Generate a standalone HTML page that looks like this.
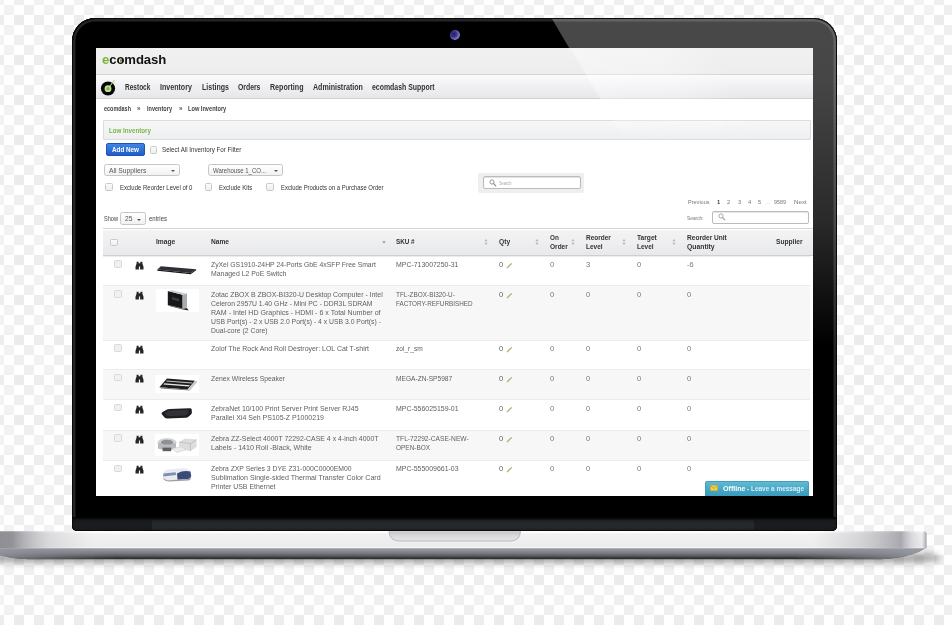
<!DOCTYPE html>
<html lang="en"><head><meta charset="utf-8"><title>ecomdash - Low Inventory</title>
<style>
html,body{margin:0;padding:0}
body{width:952px;height:625px;overflow:hidden;position:relative;font-family:"Liberation Sans",sans-serif;
 background:repeating-conic-gradient(#eeeeee 0% 25%,#ffffff 0% 50%) 14px 5px/20px 20px}
.abs,.b,.t{position:absolute}
.t{white-space:nowrap;transform-origin:0 50%;display:block}
#lid{left:72px;top:18px;width:765px;height:513px;border-radius:23px 23px 5px 5px;background:#000;overflow:hidden;
 box-shadow:inset 0 0 0 1px #050505, inset 0 0 0 3.5px #242425}
#gloss{left:0;top:0;width:765px;height:513px;
 background:linear-gradient(180deg,rgba(255,255,255,.285) 0,rgba(255,255,255,.275) 12%,rgba(255,255,255,.16) 40%,rgba(255,255,255,0) 64%);
 clip-path:polygon(479.5px 0,765px 0,765px 513px,782px 513px);}
#lidrim{left:0;top:0;width:765px;height:513px;border-radius:23px 23px 5px 5px;box-shadow:inset 0 0 0 1px #0a0a0a, inset 0 0 0 3px rgba(40,40,41,.0)}
#hingeband{left:0;top:499px;width:765px;height:14px;background:linear-gradient(#000,#0c0d0e 14%,#17191b 22%,#1b1d20 60%,#16181a)}
#hingemid{left:80px;top:502px;width:602px;height:11px;background:linear-gradient(#1c1e21,#262a2e 35%,#24282b 70%,#1c1f22)}
#cam{left:377.6px;top:12.2px;width:10px;height:10px;border-radius:50%;background:radial-gradient(circle at 36% 40%,#2a2474 0,#342d86 30%,#6d66ac 55%,#8079ba 68%,#1b1930 84%,#060608 100%)}
#screen{left:96px;top:48px;width:717px;height:447.6px;background:#fff;overflow:hidden}
#sgloss{left:0;top:0;width:717px;height:447.6px;pointer-events:none}
#shadow{left:-10px;top:553px;width:950px;height:10px;border-radius:40px/10px;background:rgba(0,0,0,.33);filter:blur(3px)}
#base{left:-18px;top:531px;width:945px;height:30px}
</style></head><body>
<svg class="abs" style="left:0;top:0" width="952" height="625" viewBox="0 0 952 625"><defs><pattern id="ck" x="4" y="5" width="40" height="40" patternUnits="userSpaceOnUse"><rect width="40" height="40" fill="#fff"/><g fill="#ebebeb"><rect x="10" y="10" width="10" height="10"/><rect x="30" y="10" width="10" height="10" fill="#ededed"/></g><g fill="#efefef"><rect x="20" y="0" width="10" height="10"/><rect x="20" y="20" width="10" height="10"/><rect x="10" y="30" width="10" height="10"/></g><g fill="#f2f2f2"><rect x="0" y="0" width="10" height="10"/><rect x="0" y="20" width="10" height="10"/><rect x="30" y="30" width="10" height="10"/></g></pattern></defs><rect width="952" height="625" fill="url(#ck)"/></svg>
<div id="shadow" class="abs"></div>
<svg id="base" class="abs" width="945" height="30" viewBox="-18 531 945 30">
 <defs>
  <linearGradient id="gt" x1="0" x2="0" y1="0" y2="1"><stop offset="0" stop-color="#ffffff"/><stop offset=".09" stop-color="#fdfdfd"/><stop offset=".14" stop-color="#f2f2f2"/><stop offset=".9" stop-color="#ececed"/><stop offset=".96" stop-color="#f8f8f8"/><stop offset="1" stop-color="#e2e2e4"/></linearGradient>
  <linearGradient id="gs" gradientUnits="userSpaceOnUse" x1="-18" x2="926.5" y1="0" y2="0">
   <stop offset="0" stop-color="#84848a" stop-opacity=".95"/><stop offset=".032" stop-color="#8a8a90" stop-opacity=".92"/><stop offset=".045" stop-color="#a5a5aa" stop-opacity=".8"/><stop offset=".07" stop-color="#c6c6ca" stop-opacity=".55"/><stop offset=".12" stop-color="#d8d8da" stop-opacity="0"/>
   <stop offset=".88" stop-color="#b8b8be" stop-opacity="0"/><stop offset=".93" stop-color="#b4b4ba" stop-opacity=".45"/><stop offset=".958" stop-color="#a2a2aa" stop-opacity=".7"/><stop offset=".973" stop-color="#9c9ca4" stop-opacity=".85"/><stop offset=".985" stop-color="#c4c4ca" stop-opacity=".5"/><stop offset=".995" stop-color="#dedee2" stop-opacity=".3"/><stop offset="1" stop-color="#85858b" stop-opacity=".8"/></linearGradient>
  <linearGradient id="gb" x1="0" x2="0" y1="0" y2="1"><stop offset="0" stop-color="#a9acb1"/><stop offset=".12" stop-color="#9b9ea4"/><stop offset=".5" stop-color="#7a7c82"/><stop offset=".75" stop-color="#55575b"/><stop offset=".93" stop-color="#2c2d2f"/><stop offset="1" stop-color="#3a3b3d"/></linearGradient>
  <linearGradient id="ge" gradientUnits="userSpaceOnUse" x1="-18" x2="926.5" y1="0" y2="0"><stop offset="0" stop-color="#9a9aa2" stop-opacity=".9"/><stop offset=".06" stop-color="#8e8e96" stop-opacity=".55"/><stop offset=".14" stop-color="#8e8e96" stop-opacity="0"/><stop offset=".86" stop-color="#8e8e96" stop-opacity="0"/><stop offset=".94" stop-color="#8e9098" stop-opacity=".55"/><stop offset="1" stop-color="#9a9ca4" stop-opacity=".9"/></linearGradient>
  <linearGradient id="gn" x1="0" x2="0" y1="0" y2="1"><stop offset="0" stop-color="#c4c4c7"/><stop offset=".45" stop-color="#d9d9db"/><stop offset="1" stop-color="#e6e6e8"/></linearGradient>
 </defs>
 <path d="M-18 547 H926.5 C924 550.5 905 559.2 880 559.2 H28.5 C3.5 559.2 -15.5 550.5 -18 547 Z" fill="url(#gb)"/>
 <path d="M-18 547 H926.5 C924 550.5 905 559.2 880 559.2 H28.5 C3.5 559.2 -15.5 550.5 -18 547 Z" fill="url(#ge)"/>
 <path d="M-15.5 531.2 H924 Q926.5 531.2 926.5 533.8 V548.2 H-18 V533.8 Q-18 531.2 -15.5 531.2 Z" fill="url(#gt)"/>
 <path d="M-15.5 531.2 H924 Q926.5 531.2 926.5 533.8 V548.2 H-18 V533.8 Q-18 531.2 -15.5 531.2 Z" fill="url(#gs)"/>
 <path d="M389 531.2 H520.5 Q520 541 510 541 H399.5 Q389.5 541 389 531.2 Z" fill="url(#gn)"/>
 <path d="M389 531.2 Q389.5 541 399.5 541 H510 Q520 541 520.5 531.2" fill="none" stroke="#b4b4b8" stroke-width=".9"/>
</svg>
<div id="lid" class="abs">
 <div id="gloss" class="abs"></div>
 <div id="hingeband" class="abs"></div>
 <div id="hingemid" class="abs"></div>
 <div id="lidrim" class="abs"></div>
 <div id="cam" class="abs"></div>
</div>
<div id="screen" class="abs">
<div class="b" style="left:0.0px;top:0.0px;width:717.0px;height:27.0px;background:linear-gradient(#f1f1f1,#ededed);border-bottom:1px solid #d4d4d4;box-sizing:border-box"></div>
<span class="t logo" style="left:6.2px;top:4.2px;font-size:13px;line-height:15px;font-weight:bold;color:#111;transform:scaleX(1.01);letter-spacing:-0.1px"><span style="color:#7ab536">e</span>comdash</span>
<div class="b" style="left:23.5px;top:11.4px;width:2.4px;height:2.4px;background:#5f9e2c;border-radius:50%"></div>
<div class="b" style="left:0.0px;top:27.0px;width:717.0px;height:24.0px;background:linear-gradient(#fbfbfb,#f2f2f4 40%,#e6e7ea);border-bottom:1px solid #d0d0d3;box-sizing:border-box"></div>
<svg class="b" style="left:4px;top:31px" width="18" height="18" viewBox="0 0 18 18"><circle cx="8" cy="9.5" r="7.1" fill="#070707"/><path d="M9.2 8 L14.3 1.5" stroke="#a9d27a" stroke-width="1.05" stroke-linecap="round"/><circle cx="8" cy="9.7" r="3.4" fill="#c2e29b"/><circle cx="8" cy="9.7" r="1.8" fill="#7cba3c"/></svg>
<span class="t" style="left:28.8px;top:33.9px;font-size:8.6px;line-height:10.32px;font-weight:bold;color:#333;transform:scaleX(0.759);">Restock</span>
<span class="t" style="left:64.3px;top:33.9px;font-size:8.6px;line-height:10.32px;font-weight:bold;color:#333;transform:scaleX(0.824);">Inventory</span>
<span class="t" style="left:105.7px;top:33.9px;font-size:8.6px;line-height:10.32px;font-weight:bold;color:#333;transform:scaleX(0.816);">Listings</span>
<span class="t" style="left:141.6px;top:33.9px;font-size:8.6px;line-height:10.32px;font-weight:bold;color:#333;transform:scaleX(0.794);">Orders</span>
<span class="t" style="left:173.7px;top:33.9px;font-size:8.6px;line-height:10.32px;font-weight:bold;color:#333;transform:scaleX(0.825);">Reporting</span>
<span class="t" style="left:216.6px;top:33.9px;font-size:8.6px;line-height:10.32px;font-weight:bold;color:#333;transform:scaleX(0.822);">Administration</span>
<span class="t" style="left:276.3px;top:33.9px;font-size:8.6px;line-height:10.32px;font-weight:bold;color:#333;transform:scaleX(0.805);">ecomdash Support</span>
<span class="t" style="left:7.7px;top:56.8px;font-size:6.6px;line-height:7.92px;font-weight:bold;color:#444;transform:scaleX(0.827);">ecomdash</span>
<span class="t" style="left:40.6px;top:56.8px;font-size:6.6px;line-height:7.92px;font-weight:bold;color:#555;transform:scaleX(0.926);">»</span>
<span class="t" style="left:51.0px;top:56.8px;font-size:6.6px;line-height:7.92px;font-weight:bold;color:#444;transform:scaleX(0.842);">Inventory</span>
<span class="t" style="left:83.2px;top:56.8px;font-size:6.6px;line-height:7.92px;font-weight:bold;color:#555;transform:scaleX(0.926);">»</span>
<span class="t" style="left:92.0px;top:56.8px;font-size:6.6px;line-height:7.92px;font-weight:bold;color:#444;transform:scaleX(0.856);">Low Inventory</span>
<div class="b" style="left:7.0px;top:72.1px;width:707.6px;height:19.6px;background:linear-gradient(#f7f7f7,#eceef1);border:1px solid #dcdcde;box-sizing:border-box;border-radius:1px"></div>
<span class="t" style="left:12.8px;top:78.6px;font-size:6.8px;line-height:8.16px;font-weight:bold;color:#7ab648;transform:scaleX(0.911);">Low Inventory</span>
<div class="b" style="left:9.7px;top:95.2px;width:39.0px;height:13.2px;background:linear-gradient(#3f85e6,#1f5fc8);border:1px solid #1d55b5;box-sizing:border-box;border-radius:2px"></div>
<span class="t" style="left:15.8px;top:98.0px;font-size:7.4px;line-height:8.88px;font-weight:bold;color:#fff;transform:scaleX(0.853);">Add New</span>
<div class="b" style="left:53.6px;top:98.3px;width:7.6px;height:7.6px;background:linear-gradient(#fbfbfb,#eeeeee);border:1px solid #c9c9c9;box-sizing:border-box;border-radius:1.5px"></div>
<span class="t" style="left:66.0px;top:97.5px;font-size:6.9px;line-height:8.28px;color:#333;transform:scaleX(0.901);">Select All Inventory For Filter</span>
<div class="b" style="left:8.4px;top:116.0px;width:75.8px;height:11.6px;background:linear-gradient(#fff,#f1f1f1);border:1px solid #c6c6c6;box-sizing:border-box;border-radius:2.5px"><i style="position:absolute;right:4px;top:5.0px;border:2px solid transparent;border-top:2.4px solid #555;border-bottom:0"></i></div>
<span class="t" style="left:13.3px;top:117.8px;font-size:7.6px;line-height:9.12px;color:#555;transform:scaleX(0.888);">All Suppliers</span>
<div class="b" style="left:112.0px;top:116.0px;width:75.0px;height:11.6px;background:linear-gradient(#fff,#f1f1f1);border:1px solid #c6c6c6;box-sizing:border-box;border-radius:2.5px"><i style="position:absolute;right:4px;top:5.0px;border:2px solid transparent;border-top:2.4px solid #555;border-bottom:0"></i></div>
<span class="t" style="left:116.6px;top:117.8px;font-size:7.6px;line-height:9.12px;color:#555;transform:scaleX(0.792);">Warehouse 1_CO...</span>
<div class="b" style="left:9.0px;top:135.2px;width:7.6px;height:7.6px;background:linear-gradient(#fbfbfb,#eeeeee);border:1px solid #c9c9c9;box-sizing:border-box;border-radius:1.5px"></div>
<span class="t" style="left:23.5px;top:135.5px;font-size:6.9px;line-height:8.28px;color:#333;transform:scaleX(0.871);">Exclude Reorder Level of 0</span>
<div class="b" style="left:108.8px;top:135.2px;width:7.6px;height:7.6px;background:linear-gradient(#fbfbfb,#eeeeee);border:1px solid #c9c9c9;box-sizing:border-box;border-radius:1.5px"></div>
<span class="t" style="left:123.3px;top:135.5px;font-size:6.9px;line-height:8.28px;color:#333;transform:scaleX(0.877);">Exclude Kits</span>
<div class="b" style="left:170.0px;top:135.2px;width:7.6px;height:7.6px;background:linear-gradient(#fbfbfb,#eeeeee);border:1px solid #c9c9c9;box-sizing:border-box;border-radius:1.5px"></div>
<span class="t" style="left:184.8px;top:135.5px;font-size:6.9px;line-height:8.28px;color:#333;transform:scaleX(0.857);">Exclude Products on a Purchase Order</span>
<div class="b" style="left:382.0px;top:124.9px;width:105.8px;height:19.8px;background:#efefef;border-radius:2px"></div>
<div class="b" style="left:387.0px;top:128.0px;width:97.8px;height:12.8px;background:#fff;border:1px solid #bbb;box-sizing:border-box;border-radius:2px;box-shadow:inset 0 1px 1px rgba(0,0,0,.12)"></div>
<svg class="b" style="left:392.6px;top:130.6px" width="8" height="8" viewBox="0 0 8 8"><circle cx="3" cy="3" r="2.1" fill="none" stroke="#8a8a8a" stroke-width=".9"/><path d="M4.6 4.6 L6.8 6.8" stroke="#8a8a8a" stroke-width="1.2" stroke-linecap="round"/></svg>
<span class="t" style="left:402.5px;top:131.1px;font-size:6.2px;line-height:7.44px;color:#aaa;transform:scaleX(0.636);">Search</span>
<span class="t" style="left:592.0px;top:150.1px;font-size:6.2px;line-height:7.44px;color:#777;transform:scaleX(0.895);">Previous</span>
<span class="t" style="left:620.8px;top:150.1px;font-size:6.2px;line-height:7.44px;font-weight:bold;color:#444;transform:scaleX(0.928);">1</span>
<span class="t" style="left:631.2px;top:150.1px;font-size:6.2px;line-height:7.44px;color:#777;transform:scaleX(0.928);">2</span>
<span class="t" style="left:641.6px;top:150.1px;font-size:6.2px;line-height:7.44px;color:#777;transform:scaleX(0.928);">3</span>
<span class="t" style="left:652.0px;top:150.1px;font-size:6.2px;line-height:7.44px;color:#777;transform:scaleX(0.928);">4</span>
<span class="t" style="left:662.2px;top:150.1px;font-size:6.2px;line-height:7.44px;color:#777;transform:scaleX(0.928);">5</span>
<span class="t" style="left:670.0px;top:150.1px;font-size:6.2px;line-height:7.44px;color:#999;transform:scaleX(0.645);">…</span>
<span class="t" style="left:678.3px;top:150.1px;font-size:6.2px;line-height:7.44px;color:#777;transform:scaleX(0.870);">9589</span>
<span class="t" style="left:697.5px;top:150.1px;font-size:6.2px;line-height:7.44px;color:#777;transform:scaleX(1.004);">Next</span>
<span class="t" style="left:7.7px;top:166.8px;font-size:6.6px;line-height:7.92px;color:#444;transform:scaleX(0.848);">Show</span>
<div class="b" style="left:23.8px;top:164.3px;width:26.2px;height:12.8px;background:linear-gradient(#fff,#f1f1f1);border:1px solid #c6c6c6;box-sizing:border-box;border-radius:2.5px"><i style="position:absolute;right:4px;top:5.6px;border:2px solid transparent;border-top:2.4px solid #555;border-bottom:0"></i></div>
<span class="t" style="left:28.6px;top:167.2px;font-size:7.2px;line-height:8.64px;color:#555;transform:scaleX(0.924);">25</span>
<span class="t" style="left:52.5px;top:166.8px;font-size:6.6px;line-height:7.92px;color:#444;transform:scaleX(0.909);">entries</span>
<span class="t" style="left:590.8px;top:166.1px;font-size:6.2px;line-height:7.44px;color:#777;transform:scaleX(0.777);">Search:</span>
<div class="b" style="left:615.6px;top:162.7px;width:97.4px;height:13.6px;background:#fff;border:1px solid #bbb;box-sizing:border-box;border-radius:2px;box-shadow:inset 0 1px 1px rgba(0,0,0,.1)"></div>
<svg class="b" style="left:621.6px;top:165.4px" width="8" height="8" viewBox="0 0 8 8"><circle cx="3" cy="3" r="2.1" fill="none" stroke="#a0a0a0" stroke-width=".9"/><path d="M4.6 4.6 L6.8 6.8" stroke="#a0a0a0" stroke-width="1.2" stroke-linecap="round"/></svg>
<div class="b" style="left:7.2px;top:180.4px;width:709.8px;height:27.2px;background:linear-gradient(#f4f4f5,#eeeef0 55%,#e7e8ea);border-top:1px solid #d4d4d6;border-bottom:1px solid #cfcfd2;box-sizing:border-box;box-shadow:inset 0 1px 0 #fff"></div>
<div class="b" style="left:14.0px;top:190.6px;width:7.8px;height:7.8px;background:linear-gradient(#fbfbfb,#eeeeee);border:1px solid #c9c9c9;box-sizing:border-box;border-radius:1.5px"></div>
<span class="t" style="left:60.0px;top:189.4px;font-size:8.0px;line-height:9.6px;font-weight:bold;color:#333;transform:scaleX(0.835);">Image</span>
<span class="t" style="left:115.0px;top:189.4px;font-size:8.0px;line-height:9.6px;font-weight:bold;color:#333;transform:scaleX(0.826);">Name</span>
<span class="t" style="left:300.3px;top:189.4px;font-size:8.0px;line-height:9.6px;font-weight:bold;color:#333;transform:scaleX(0.785);">SKU #</span>
<span class="t" style="left:403.3px;top:189.4px;font-size:8.0px;line-height:9.6px;font-weight:bold;color:#333;transform:scaleX(0.832);">Qty</span>
<span class="t" style="left:453.8px;top:185.4px;font-size:8.0px;line-height:9.6px;font-weight:bold;color:#333;transform:scaleX(0.792);">On</span>
<span class="t" style="left:453.8px;top:194.4px;font-size:8.0px;line-height:9.6px;font-weight:bold;color:#333;transform:scaleX(0.817);">Order</span>
<span class="t" style="left:489.7px;top:185.4px;font-size:8.0px;line-height:9.6px;font-weight:bold;color:#333;transform:scaleX(0.808);">Reorder</span>
<span class="t" style="left:489.7px;top:194.4px;font-size:8.0px;line-height:9.6px;font-weight:bold;color:#333;transform:scaleX(0.811);">Level</span>
<span class="t" style="left:540.9px;top:185.4px;font-size:8.0px;line-height:9.6px;font-weight:bold;color:#333;transform:scaleX(0.830);">Target</span>
<span class="t" style="left:540.9px;top:194.4px;font-size:8.0px;line-height:9.6px;font-weight:bold;color:#333;transform:scaleX(0.811);">Level</span>
<span class="t" style="left:591.3px;top:185.4px;font-size:8.0px;line-height:9.6px;font-weight:bold;color:#333;transform:scaleX(0.821);">Reorder Unit</span>
<span class="t" style="left:591.3px;top:194.4px;font-size:8.0px;line-height:9.6px;font-weight:bold;color:#333;transform:scaleX(0.851);">Quantity</span>
<span class="t" style="left:680.0px;top:189.4px;font-size:8.0px;line-height:9.6px;font-weight:bold;color:#333;transform:scaleX(0.828);">Supplier</span>
<svg class="b" style="left:388.2px;top:190.8px" width="4" height="6" viewBox="0 0 4 6"><path d="M2 0 L3.6 2.2 H0.4 Z M2 6 L3.6 3.8 H0.4 Z" fill="#b5b5b8"/></svg>
<svg class="b" style="left:438.7px;top:190.8px" width="4" height="6" viewBox="0 0 4 6"><path d="M2 0 L3.6 2.2 H0.4 Z M2 6 L3.6 3.8 H0.4 Z" fill="#b5b5b8"/></svg>
<svg class="b" style="left:474.8px;top:190.8px" width="4" height="6" viewBox="0 0 4 6"><path d="M2 0 L3.6 2.2 H0.4 Z M2 6 L3.6 3.8 H0.4 Z" fill="#b5b5b8"/></svg>
<svg class="b" style="left:525.9px;top:190.8px" width="4" height="6" viewBox="0 0 4 6"><path d="M2 0 L3.6 2.2 H0.4 Z M2 6 L3.6 3.8 H0.4 Z" fill="#b5b5b8"/></svg>
<svg class="b" style="left:576.0px;top:190.8px" width="4" height="6" viewBox="0 0 4 6"><path d="M2 0 L3.6 2.2 H0.4 Z M2 6 L3.6 3.8 H0.4 Z" fill="#b5b5b8"/></svg>
<svg class="b" style="left:285.9px;top:192.6px" width="4" height="3" viewBox="0 0 4 3"><path d="M0.3 0.3 H3.7 L2 2.7 Z" fill="#999"/></svg>
<div class="b" style="left:7.2px;top:207.6px;width:706.8px;height:29.8px;background:#fff;border-top:1px solid #ececec;box-sizing:border-box"></div>
<div class="b" style="left:18.2px;top:212.2px;width:7.6px;height:7.6px;background:#f0f0f0;border:1px solid #d9d9d9;box-sizing:border-box;border-radius:1.5px"></div>
<svg class="b" style="left:38.6px;top:213.0px" width="9" height="9" viewBox="0 0 9 9"><path d="M1.6 0.8 h2 v1.4 h1.8 v-1.4 h2 v1.6 l1.1 3.4 v2.6 h-3.4 v-3 h-1.2 v3 h-3.4 v-2.6 l1.1 -3.4 z" fill="#262626"/></svg>
<span class="t" style="left:115.0px;top:211.8px;font-size:7.6px;line-height:9.12px;color:#5e5e5e;transform:scaleX(0.897);">ZyXel GS1910-24HP 24-Ports GbE 4xSFP Free Smart</span>
<span class="t" style="left:115.0px;top:220.8px;font-size:7.6px;line-height:9.12px;color:#5e5e5e;transform:scaleX(0.907);">Managed L2 PoE Switch</span>
<span class="t" style="left:300.3px;top:211.8px;font-size:7.6px;line-height:9.12px;color:#5e5e5e;transform:scaleX(0.913);">MPC-713007250-31</span>
<span class="t" style="left:403.2px;top:211.8px;font-size:7.6px;line-height:9.12px;color:#5e5e5e;transform:scaleX(0.994);">0</span>
<svg class="b" style="left:409.8px;top:214.0px" width="7" height="7" viewBox="0 0 7 7"><path d="M0.6 6.4 L1.1 4.9 L5.3 0.9 L6.2 1.8 L2 5.9 Z" fill="#b9a96c"/></svg>
<span class="t" style="left:453.8px;top:211.8px;font-size:7.6px;line-height:9.12px;color:#777;transform:scaleX(0.994);">0</span>
<span class="t" style="left:489.7px;top:211.8px;font-size:7.6px;line-height:9.12px;color:#777;transform:scaleX(0.994);">3</span>
<span class="t" style="left:540.9px;top:211.8px;font-size:7.6px;line-height:9.12px;color:#777;transform:scaleX(0.994);">0</span>
<span class="t" style="left:591.3px;top:211.8px;font-size:7.6px;line-height:9.12px;color:#777;transform:scaleX(0.977);">-6</span>
<div class="b" style="left:7.2px;top:237.4px;width:706.8px;height:54.2px;background:#f7f7f7;border-top:1px solid #ececec;box-sizing:border-box"></div>
<div class="b" style="left:18.2px;top:242.0px;width:7.6px;height:7.6px;background:#f0f0f0;border:1px solid #d9d9d9;box-sizing:border-box;border-radius:1.5px"></div>
<svg class="b" style="left:38.6px;top:242.8px" width="9" height="9" viewBox="0 0 9 9"><path d="M1.6 0.8 h2 v1.4 h1.8 v-1.4 h2 v1.6 l1.1 3.4 v2.6 h-3.4 v-3 h-1.2 v3 h-3.4 v-2.6 l1.1 -3.4 z" fill="#262626"/></svg>
<span class="t" style="left:115.0px;top:241.8px;font-size:7.6px;line-height:9.12px;color:#5e5e5e;transform:scaleX(0.910);">Zotac ZBOX B ZBOX-BI320-U Desktop Computer - Intel</span>
<span class="t" style="left:115.0px;top:250.8px;font-size:7.6px;line-height:9.12px;color:#5e5e5e;transform:scaleX(0.900);">Celeron 2957U 1.40 GHz - Mini PC - DDR3L SDRAM</span>
<span class="t" style="left:115.0px;top:259.8px;font-size:7.6px;line-height:9.12px;color:#5e5e5e;transform:scaleX(0.931);">RAM - Intel HD Graphics - HDMI - 6 x Total Number of</span>
<span class="t" style="left:115.0px;top:268.8px;font-size:7.6px;line-height:9.12px;color:#5e5e5e;transform:scaleX(0.897);">USB Port(s) - 2 x USB 2.0 Port(s) - 4 x USB 3.0 Port(s) -</span>
<span class="t" style="left:115.0px;top:277.8px;font-size:7.6px;line-height:9.12px;color:#5e5e5e;transform:scaleX(0.899);">Dual-core (2 Core)</span>
<span class="t" style="left:300.3px;top:241.8px;font-size:7.6px;line-height:9.12px;color:#5e5e5e;transform:scaleX(0.845);">TFL-ZBOX-BI320-U-</span>
<span class="t" style="left:300.3px;top:250.8px;font-size:7.6px;line-height:9.12px;color:#5e5e5e;transform:scaleX(0.833);">FACTORY-REFURBISHED</span>
<span class="t" style="left:403.2px;top:241.8px;font-size:7.6px;line-height:9.12px;color:#5e5e5e;transform:scaleX(0.994);">0</span>
<svg class="b" style="left:409.8px;top:243.9px" width="7" height="7" viewBox="0 0 7 7"><path d="M0.6 6.4 L1.1 4.9 L5.3 0.9 L6.2 1.8 L2 5.9 Z" fill="#b9a96c"/></svg>
<span class="t" style="left:453.8px;top:241.8px;font-size:7.6px;line-height:9.12px;color:#777;transform:scaleX(0.994);">0</span>
<span class="t" style="left:489.7px;top:241.8px;font-size:7.6px;line-height:9.12px;color:#777;transform:scaleX(0.994);">0</span>
<span class="t" style="left:540.9px;top:241.8px;font-size:7.6px;line-height:9.12px;color:#777;transform:scaleX(0.994);">0</span>
<span class="t" style="left:591.3px;top:241.8px;font-size:7.6px;line-height:9.12px;color:#777;transform:scaleX(0.994);">0</span>
<div class="b" style="left:7.2px;top:291.6px;width:706.8px;height:29.4px;background:#fff;border-top:1px solid #ececec;box-sizing:border-box"></div>
<div class="b" style="left:18.2px;top:296.2px;width:7.6px;height:7.6px;background:#f0f0f0;border:1px solid #d9d9d9;box-sizing:border-box;border-radius:1.5px"></div>
<svg class="b" style="left:38.6px;top:297.0px" width="9" height="9" viewBox="0 0 9 9"><path d="M1.6 0.8 h2 v1.4 h1.8 v-1.4 h2 v1.6 l1.1 3.4 v2.6 h-3.4 v-3 h-1.2 v3 h-3.4 v-2.6 l1.1 -3.4 z" fill="#262626"/></svg>
<span class="t" style="left:115.0px;top:295.8px;font-size:7.6px;line-height:9.12px;color:#5e5e5e;transform:scaleX(0.918);">Zolof The Rock And Roll Destroyer: LOL Cat T-shirt</span>
<span class="t" style="left:300.3px;top:295.8px;font-size:7.6px;line-height:9.12px;color:#5e5e5e;transform:scaleX(0.866);">zol_r_sm</span>
<span class="t" style="left:403.2px;top:295.8px;font-size:7.6px;line-height:9.12px;color:#5e5e5e;transform:scaleX(0.994);">0</span>
<svg class="b" style="left:409.8px;top:298.2px" width="7" height="7" viewBox="0 0 7 7"><path d="M0.6 6.4 L1.1 4.9 L5.3 0.9 L6.2 1.8 L2 5.9 Z" fill="#b9a96c"/></svg>
<span class="t" style="left:453.8px;top:295.8px;font-size:7.6px;line-height:9.12px;color:#777;transform:scaleX(0.994);">0</span>
<span class="t" style="left:489.7px;top:295.8px;font-size:7.6px;line-height:9.12px;color:#777;transform:scaleX(0.994);">0</span>
<span class="t" style="left:540.9px;top:295.8px;font-size:7.6px;line-height:9.12px;color:#777;transform:scaleX(0.994);">0</span>
<span class="t" style="left:591.3px;top:295.8px;font-size:7.6px;line-height:9.12px;color:#777;transform:scaleX(0.994);">0</span>
<div class="b" style="left:7.2px;top:321.0px;width:706.8px;height:30.2px;background:#f7f7f7;border-top:1px solid #ececec;box-sizing:border-box"></div>
<div class="b" style="left:18.2px;top:325.6px;width:7.6px;height:7.6px;background:#f0f0f0;border:1px solid #d9d9d9;box-sizing:border-box;border-radius:1.5px"></div>
<svg class="b" style="left:38.6px;top:326.4px" width="9" height="9" viewBox="0 0 9 9"><path d="M1.6 0.8 h2 v1.4 h1.8 v-1.4 h2 v1.6 l1.1 3.4 v2.6 h-3.4 v-3 h-1.2 v3 h-3.4 v-2.6 l1.1 -3.4 z" fill="#262626"/></svg>
<span class="t" style="left:115.0px;top:325.8px;font-size:7.6px;line-height:9.12px;color:#5e5e5e;transform:scaleX(0.894);">Zenex Wireless Speaker</span>
<span class="t" style="left:300.3px;top:325.8px;font-size:7.6px;line-height:9.12px;color:#5e5e5e;transform:scaleX(0.870);">MEGA-ZN-SP5987</span>
<span class="t" style="left:403.2px;top:325.8px;font-size:7.6px;line-height:9.12px;color:#5e5e5e;transform:scaleX(0.994);">0</span>
<svg class="b" style="left:409.8px;top:328.2px" width="7" height="7" viewBox="0 0 7 7"><path d="M0.6 6.4 L1.1 4.9 L5.3 0.9 L6.2 1.8 L2 5.9 Z" fill="#b9a96c"/></svg>
<span class="t" style="left:453.8px;top:325.8px;font-size:7.6px;line-height:9.12px;color:#777;transform:scaleX(0.994);">0</span>
<span class="t" style="left:489.7px;top:325.8px;font-size:7.6px;line-height:9.12px;color:#777;transform:scaleX(0.994);">0</span>
<span class="t" style="left:540.9px;top:325.8px;font-size:7.6px;line-height:9.12px;color:#777;transform:scaleX(0.994);">0</span>
<span class="t" style="left:591.3px;top:325.8px;font-size:7.6px;line-height:9.12px;color:#777;transform:scaleX(0.994);">0</span>
<div class="b" style="left:7.2px;top:351.2px;width:706.8px;height:30.3px;background:#fff;border-top:1px solid #ececec;box-sizing:border-box"></div>
<div class="b" style="left:18.2px;top:355.8px;width:7.6px;height:7.6px;background:#f0f0f0;border:1px solid #d9d9d9;box-sizing:border-box;border-radius:1.5px"></div>
<svg class="b" style="left:38.6px;top:356.6px" width="9" height="9" viewBox="0 0 9 9"><path d="M1.6 0.8 h2 v1.4 h1.8 v-1.4 h2 v1.6 l1.1 3.4 v2.6 h-3.4 v-3 h-1.2 v3 h-3.4 v-2.6 l1.1 -3.4 z" fill="#262626"/></svg>
<span class="t" style="left:115.0px;top:355.8px;font-size:7.6px;line-height:9.12px;color:#5e5e5e;transform:scaleX(0.915);">ZebraNet 10/100 Print Server Print Server RJ45</span>
<span class="t" style="left:115.0px;top:364.8px;font-size:7.6px;line-height:9.12px;color:#5e5e5e;transform:scaleX(0.919);">Parallel Xi4 Seh PS105-Z P1000219</span>
<span class="t" style="left:300.3px;top:355.8px;font-size:7.6px;line-height:9.12px;color:#5e5e5e;transform:scaleX(0.915);">MPC-556025159-01</span>
<span class="t" style="left:403.2px;top:355.8px;font-size:7.6px;line-height:9.12px;color:#5e5e5e;transform:scaleX(0.994);">0</span>
<svg class="b" style="left:409.8px;top:358.2px" width="7" height="7" viewBox="0 0 7 7"><path d="M0.6 6.4 L1.1 4.9 L5.3 0.9 L6.2 1.8 L2 5.9 Z" fill="#b9a96c"/></svg>
<span class="t" style="left:453.8px;top:355.8px;font-size:7.6px;line-height:9.12px;color:#777;transform:scaleX(0.994);">0</span>
<span class="t" style="left:489.7px;top:355.8px;font-size:7.6px;line-height:9.12px;color:#777;transform:scaleX(0.994);">0</span>
<span class="t" style="left:540.9px;top:355.8px;font-size:7.6px;line-height:9.12px;color:#777;transform:scaleX(0.994);">0</span>
<span class="t" style="left:591.3px;top:355.8px;font-size:7.6px;line-height:9.12px;color:#777;transform:scaleX(0.994);">0</span>
<div class="b" style="left:7.2px;top:381.5px;width:706.8px;height:30.4px;background:#f7f7f7;border-top:1px solid #ececec;box-sizing:border-box"></div>
<div class="b" style="left:18.2px;top:386.1px;width:7.6px;height:7.6px;background:#f0f0f0;border:1px solid #d9d9d9;box-sizing:border-box;border-radius:1.5px"></div>
<svg class="b" style="left:38.6px;top:386.9px" width="9" height="9" viewBox="0 0 9 9"><path d="M1.6 0.8 h2 v1.4 h1.8 v-1.4 h2 v1.6 l1.1 3.4 v2.6 h-3.4 v-3 h-1.2 v3 h-3.4 v-2.6 l1.1 -3.4 z" fill="#262626"/></svg>
<span class="t" style="left:115.0px;top:385.8px;font-size:7.6px;line-height:9.12px;color:#5e5e5e;transform:scaleX(0.913);">Zebra ZZ-Select 4000T 72292-CASE 4 x 4-inch 4000T</span>
<span class="t" style="left:115.0px;top:394.8px;font-size:7.6px;line-height:9.12px;color:#5e5e5e;transform:scaleX(0.932);">Labels - 1410 Roll -Black, White</span>
<span class="t" style="left:300.3px;top:385.8px;font-size:7.6px;line-height:9.12px;color:#5e5e5e;transform:scaleX(0.876);">TFL-72292-CASE-NEW-</span>
<span class="t" style="left:300.3px;top:394.8px;font-size:7.6px;line-height:9.12px;color:#5e5e5e;transform:scaleX(0.850);">OPEN-BOX</span>
<span class="t" style="left:403.2px;top:385.8px;font-size:7.6px;line-height:9.12px;color:#5e5e5e;transform:scaleX(0.994);">0</span>
<svg class="b" style="left:409.8px;top:388.2px" width="7" height="7" viewBox="0 0 7 7"><path d="M0.6 6.4 L1.1 4.9 L5.3 0.9 L6.2 1.8 L2 5.9 Z" fill="#b9a96c"/></svg>
<span class="t" style="left:453.8px;top:385.8px;font-size:7.6px;line-height:9.12px;color:#777;transform:scaleX(0.994);">0</span>
<span class="t" style="left:489.7px;top:385.8px;font-size:7.6px;line-height:9.12px;color:#777;transform:scaleX(0.994);">0</span>
<span class="t" style="left:540.9px;top:385.8px;font-size:7.6px;line-height:9.12px;color:#777;transform:scaleX(0.994);">0</span>
<span class="t" style="left:591.3px;top:385.8px;font-size:7.6px;line-height:9.12px;color:#777;transform:scaleX(0.994);">0</span>
<div class="b" style="left:7.2px;top:411.9px;width:706.8px;height:40.1px;background:#fff;border-top:1px solid #ececec;box-sizing:border-box"></div>
<div class="b" style="left:18.2px;top:416.5px;width:7.6px;height:7.6px;background:#f0f0f0;border:1px solid #d9d9d9;box-sizing:border-box;border-radius:1.5px"></div>
<svg class="b" style="left:38.6px;top:417.3px" width="9" height="9" viewBox="0 0 9 9"><path d="M1.6 0.8 h2 v1.4 h1.8 v-1.4 h2 v1.6 l1.1 3.4 v2.6 h-3.4 v-3 h-1.2 v3 h-3.4 v-2.6 l1.1 -3.4 z" fill="#262626"/></svg>
<span class="t" style="left:115.0px;top:415.8px;font-size:7.6px;line-height:9.12px;color:#5e5e5e;transform:scaleX(0.896);">Zebra ZXP Series 3 DYE Z31-000C0000EM00</span>
<span class="t" style="left:115.0px;top:424.8px;font-size:7.6px;line-height:9.12px;color:#5e5e5e;transform:scaleX(0.931);">Sublimation Single-sided Thermal Transfer Color Card</span>
<span class="t" style="left:115.0px;top:433.8px;font-size:7.6px;line-height:9.12px;color:#5e5e5e;transform:scaleX(0.910);">Printer USB Ethernet</span>
<span class="t" style="left:300.3px;top:415.8px;font-size:7.6px;line-height:9.12px;color:#5e5e5e;transform:scaleX(0.915);">MPC-555009661-03</span>
<span class="t" style="left:403.2px;top:415.8px;font-size:7.6px;line-height:9.12px;color:#5e5e5e;transform:scaleX(0.994);">0</span>
<svg class="b" style="left:409.8px;top:418.1px" width="7" height="7" viewBox="0 0 7 7"><path d="M0.6 6.4 L1.1 4.9 L5.3 0.9 L6.2 1.8 L2 5.9 Z" fill="#b9a96c"/></svg>
<span class="t" style="left:453.8px;top:415.8px;font-size:7.6px;line-height:9.12px;color:#777;transform:scaleX(0.994);">0</span>
<span class="t" style="left:489.7px;top:415.8px;font-size:7.6px;line-height:9.12px;color:#777;transform:scaleX(0.994);">0</span>
<span class="t" style="left:540.9px;top:415.8px;font-size:7.6px;line-height:9.12px;color:#777;transform:scaleX(0.994);">0</span>
<span class="t" style="left:591.3px;top:415.8px;font-size:7.6px;line-height:9.12px;color:#777;transform:scaleX(0.994);">0</span>
<svg class="b" style="left:60.0px;top:210.0px;background:#fff" width="43" height="23" viewBox="0 0 43 23"><path d="M4.9 8.3 L40.2 11.2 L34.6 15 L1.3 11.6 Z" fill="#2e3034"/><path d="M1.3 11.6 L34.6 15 L40.2 11.2 L40.2 12.2 L34.6 16.3 L1.3 12.8 Z" fill="#17181a"/></svg>
<svg class="b" style="left:60.0px;top:241.0px;background:#fff" width="42.5" height="23" viewBox="0 0 42.5 23"><path d="M11.8 2 L26.6 5.8 L26.6 19.6 L11.8 16 Z" fill="#17181a"/><path d="M26.6 5.8 L31 4.8 L31 18.6 L26.6 19.6 Z" fill="#a9acb0"/><path d="M11.8 2 L16 1.2 L31 4.8 L26.6 5.8 Z" fill="#c9cbce"/><path d="M12.4 16.8 L27 20.4 L32.6 21.6 L31 19 L26.6 19.8 L12.4 16.3 Z" fill="#2a2b2d"/><path d="M16 8 L23 9.8 L23 12.4 L16 10.6 Z" fill="#3a3c40"/></svg>
<svg class="b" style="left:59.0px;top:326.7px;background:#fff" width="44" height="18.5" viewBox="0 0 44 18.5"><path d="M4.4 12.2 L12 3.6 L40 5.8 L32.6 14.6 Z" fill="#1d1e20"/><path d="M8.2 9.6 L33.8 11.6 L35 10.2 L9.4 8.3 Z" fill="#e8e8e8"/><path d="M11 6.6 L36.6 8.6 L37.6 7.5 L12 5.6 Z" fill="#bdbdbd"/><path d="M32.6 14.6 L40 5.8 L42.6 6.4 L35 15.6 Z" fill="#c8c8c8"/><path d="M4.4 12.2 L32.6 14.6 L35 15.6 L6 13.4 Z" fill="#777"/></svg>
<svg class="b" style="left:59.0px;top:356.0px;background:#fff" width="44" height="19.5" viewBox="0 0 44 19.5"><path d="M6.6 9.9 Q6.2 9 7.6 8 L12 5.6 Q13 5 14.6 4.9 L34.6 4.2 Q36.6 4.2 36.7 5.6 L36.9 8.6 Q36.9 9.6 36 10.4 L33.4 12.8 Q32.4 13.6 30.8 13.7 L12.4 14.6 Q10.6 14.6 9.6 13.6 Z" fill="#1d1e20"/><path d="M13.4 6.6 L33 5.8 L33.6 8.6 L31 11.4 L12.6 12.2 L9.6 9.6 Z" fill="#303235"/></svg>
<svg class="b" style="left:59.0px;top:385.7px;background:#fff" width="44" height="22" viewBox="0 0 44 22"><ellipse cx="12" cy="8.6" rx="9.6" ry="4.4" fill="#cfd0d2"/><path d="M3 9 h18 v5.4 q-9 3 -18 0 z" fill="#b9babc"/><ellipse cx="12" cy="8.2" rx="6" ry="2.4" fill="#8e9093"/><rect x="7.6" y="13.6" width="8.6" height="3.6" fill="#5f6164"/><path d="M24 8 L30 4.4 L41.6 5.6 L41.6 13 L35.4 17 L24 15.4 Z" fill="#dcdddf"/><path d="M24 8 L35.4 9.6 L41.6 5.6 M35.4 9.6 V17" stroke="#b4b5b8" stroke-width=".7" fill="none"/><path d="M17.6 14.6 L26 12.6 L31 15.6 L22 18.6 Z" fill="#ececee" stroke="#c2c3c5" stroke-width=".5"/></svg>
<svg class="b" style="left:59.0px;top:417.0px;background:#fff" width="44" height="19" viewBox="0 0 44 19"><path d="M8.4 7.6 Q9 5.4 12.6 4.6 L27.6 3.2 Q33.6 3 35.4 6.4 L36.2 10.8 Q36 13.4 33.2 14 L14.6 15.2 Q9.6 15.2 8.2 12.4 Z" fill="#e9ebee"/><path d="M22 8.4 Q28 5 35.4 6.4 L36.2 10.8 Q36 13.4 33.2 14 L22.6 14.7 Z" fill="#3a4a78"/><path d="M8.4 8.4 L20.6 7.2 L21.2 10 L8.2 11.4 Z" fill="#7d8fb8"/><path d="M8.2 12.4 Q9.6 15.2 14.6 15.2 L33.2 14 Q36 13.4 36.2 10.8 L36.2 12.4 Q36 15 33.2 15.5 L14.6 16.6 Q9.4 16.4 8.2 13.6 Z" fill="#9aa0aa"/></svg>
<div class="b" style="left:608.7px;top:433.2px;width:104.3px;height:15.0px;background:linear-gradient(#62bad4,#46a6c5 55%,#3b9bbc);border:1px solid #3f9dbd;border-bottom:0;box-sizing:border-box;border-radius:2px 2px 0 0"></div>
<svg class="b" style="left:614.2px;top:437.4px" width="8" height="6" viewBox="0 0 8 6"><rect x=".3" y=".3" width="7.4" height="5.4" rx=".8" fill="#f0d24a" stroke="#c9a520" stroke-width=".6"/><path d="M.6 .8 L4 3.4 L7.4 .8" stroke="#b8941a" stroke-width=".7" fill="none"/></svg>
<span class="t" style="left:626.6px;top:436.6px;font-size:6.8px;line-height:8.16px;font-weight:bold;color:#fff;transform:scaleX(1.045);">Offline</span>
<span class="t" style="left:650.6px;top:436.6px;font-size:6.8px;line-height:8.16px;font-weight:bold;color:#d8eef6;transform:scaleX(0.950);">- Leave a message</span>
<div class="b" style="left:474px;top:0;width:150px;height:448px;transform-origin:0 0;transform:skewX(30.5deg);background:linear-gradient(90deg,rgba(255,255,255,.38),rgba(255,255,255,.3) 55%,rgba(255,255,255,0));-webkit-mask-image:linear-gradient(#000 0,#000 55px,transparent 100px);mask-image:linear-gradient(#000 0,#000 55px,transparent 100px)"></div>
</div>
</body></html>
